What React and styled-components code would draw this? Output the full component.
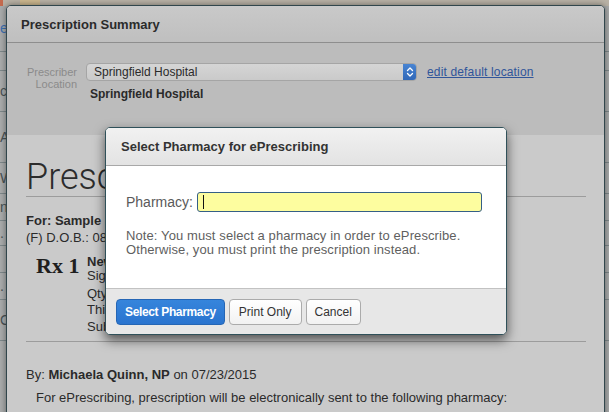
import React from 'react';
import styled, { createGlobalStyle } from 'styled-components';

const GlobalStyle = createGlobalStyle`
  html, body {
    margin: 0;
    padding: 0;
  }
  body {
    width: 609px;
    height: 412px;
    overflow: hidden;
    background: #8f9697;
    font-family: "Liberation Sans", Arial, sans-serif;
  }
`;

const Screen = styled.div`
  position: relative;
  width: 609px;
  height: 412px;
  overflow: hidden;
  background: #8f9697;
`;

// the page behind the dialogs, only a sliver of it shows at the edges
const BehindPage = styled.div`
  display: flex;
  flex-direction: column;
  width: 609px;
  height: 412px;
  background: #a9abab;
`;

const BehindTop = styled.div`
  height: 6px;
  background: linear-gradient(90deg, #c46a4e 0 3px, #b9b2a6 3px 20px, #cdb88f 20px 40px, #b9b2a6 40px);
`;

const BehindRow = styled.div`
  height: ${(p) => p.h}px;
  border-bottom: 1px solid #7d8789;
  color: ${(p) => p.color || '#4a5254'};
  font-size: 14px;
  line-height: ${(p) => p.h}px;
`;

const OuterModal = styled.div`
  position: absolute;
  left: 6px;
  top: 5px;
  width: 599px;
  bottom: -20px;
  box-sizing: border-box;
  border: 1px solid #31464c;
  border-radius: 5px 5px 0 0;
  box-shadow: 0 0 6px rgba(0, 0, 0, 0.45);
  display: flex;
  flex-direction: column;
  overflow: hidden;
  background: #cacaca;
`;

const OuterHeader = styled.div`
  height: 36px;
  display: flex;
  align-items: center;
  padding: 0 14px;
  background: linear-gradient(#c9c9c9, #bfbfbf);
  border-bottom: 1px solid #8e8e8e;
`;

const OuterTitle = styled.h3`
  margin: 0;
  font-size: 13px;
  font-weight: bold;
  color: #2b2b2b;
`;

const LocationSection = styled.div`
  height: 92px;
  box-sizing: border-box;
  padding: 20px 0 0 18px;
  background: #bcbcbc;
  display: flex;
  align-items: flex-start;
`;

const FieldLabel = styled.div`
  width: 52px;
  margin-top: 3px;
  text-align: right;
  font-size: 11px;
  line-height: 12px;
  color: #8b8b8b;
`;

const LocationColumn = styled.div`
  display: flex;
  flex-direction: column;
  margin-left: 9px;
`;

const LocationRow = styled.div`
  display: flex;
  align-items: center;
`;

const SelectBox = styled.div`
  width: 331px;
  height: 18px;
  box-sizing: border-box;
  border: 1px solid #a5a5a5;
  border-radius: 4px;
  background: linear-gradient(#d5d5d5, #cacaca);
  display: flex;
  align-items: center;
  justify-content: space-between;
  overflow: hidden;
`;

const SelectText = styled.span`
  padding-left: 7px;
  font-size: 12px;
  color: #2a2a2a;
`;

const SelectArrow = styled.span`
  width: 14px;
  height: 18px;
  margin-right: -1px;
  border-radius: 0 4px 4px 0;
  background: linear-gradient(#4a86d4, #2f66b6);
  display: flex;
  align-items: center;
  justify-content: center;
`;

const EditLink = styled.a`
  margin-left: 10px;
  font-size: 12px;
  line-height: 18px;
  color: #30559a;
  text-decoration: underline;
  letter-spacing: 0.15px;
`;

const LocationName = styled.div`
  margin: 7px 0 0 4px;
  font-size: 12px;
  line-height: 12px;
  font-weight: bold;
  color: #2a2a2a;
`;

const SummaryBody = styled.div`
  flex: 1;
  padding: 0 18px 0 19px;
  background: #cacaca;
  color: #2a2a2a;
`;

const DocTitle = styled.h1`
  margin: 24px 0 0 0;
  padding-bottom: 1px;
  font-family: Roboto, "Liberation Sans", sans-serif;
  font-weight: 300;
  font-size: 36px;
  line-height: 36px;
  color: #2c2c2c;
  border-bottom: 1px solid #9c9c9c;
`;

const Patient = styled.div`
  margin-top: 15px;
  font-size: 13px;
  line-height: 17px;
`;

const RxBlock = styled.div`
  display: flex;
  margin: 9px 0 0 10px;
`;

const RxMark = styled.div`
  width: 43px;
  margin-top: -2px;
  font-family: "Liberation Serif", "Times New Roman", serif;
  font-weight: bold;
  font-size: 22px;
  line-height: 26px;
  color: #1e1e1e;
  white-space: nowrap;
`;

const RxDetails = styled.div`
  margin-left: 8px;
  display: flex;
  flex-direction: column;
`;

const DetailLine = styled.div`
  margin-top: ${(p) => p.gap || 0}px;
  font-size: 13px;
  line-height: 14px;
  font-weight: ${(p) => (p.bold ? 'bold' : 'normal')};
  white-space: nowrap;
`;

const Rule = styled.div`
  margin-top: 7px;
  border-top: 1px solid #9c9c9c;
`;

const SignedBy = styled.div`
  margin-top: 25px;
  font-size: 13px;
  line-height: 16px;
`;

const PharmacyNote = styled.div`
  margin: 7px 0 0 10px;
  font-size: 13px;
  line-height: 16px;
`;

const Dialog = styled.div`
  position: absolute;
  left: 105px;
  top: 127px;
  width: 402px;
  height: 208px;
  box-sizing: border-box;
  border: 1px solid #2f5059;
  border-radius: 5px;
  box-shadow: 0 5px 12px rgba(0, 0, 0, 0.6);
  overflow: hidden;
  display: flex;
  flex-direction: column;
  background: #ffffff;
`;

const DialogHeader = styled.div`
  height: 37px;
  display: flex;
  align-items: center;
  padding-left: 15px;
  background: linear-gradient(#f1f1f1, #e3e3e3);
  border-bottom: 1px solid #a8a8a8;
`;

const DialogTitle = styled.h4`
  margin: 0;
  font-size: 13px;
  font-weight: bold;
  color: #333;
`;

const DialogBody = styled.div`
  height: 122px;
  box-sizing: border-box;
  padding: 26px 0 0 20px;
  background: #ffffff;
`;

const PharmacyRow = styled.div`
  display: flex;
  align-items: center;
`;

const PharmacyLabel = styled.label`
  font-size: 14px;
  line-height: 20px;
  color: #5a5a5a;
`;

const PharmacyField = styled.div`
  width: 285px;
  height: 20px;
  margin-left: 4px;
  box-sizing: border-box;
  border: 1px solid #355f86;
  border-radius: 3px;
  background: #fdfd9f;
  display: flex;
  align-items: center;
  padding-left: 5px;
`;

const Caret = styled.span`
  width: 1px;
  height: 14px;
  background: #111;
`;

const DialogNote = styled.p`
  margin: 17px 0 0 0;
  font-size: 13px;
  line-height: 14px;
  color: #5f5f5f;
  letter-spacing: 0.1px;
`;

const DialogFooter = styled.div`
  flex: 1;
  display: flex;
  gap: 4px;
  padding: 10px 0 0 10px;
  background: #e7e7e7;
  border-top: 1px solid #c2c2c2;
`;

const Button = styled.button`
  height: 26px;
  padding: 0 ${(p) => p.pad}px;
  border-radius: 4px;
  font-family: "Liberation Sans", Arial, sans-serif;
  font-size: 12px;
  cursor: pointer;
  border: 1px solid ${(p) => (p.primary ? '#2566b5' : '#ababab')};
  background: ${(p) => (p.primary ? 'linear-gradient(#3685dc, #2a74cf)' : 'linear-gradient(#ffffff, #f2f2f2)')};
  color: ${(p) => (p.primary ? '#ffffff' : '#333333')};
  font-weight: ${(p) => (p.primary ? 'bold' : 'normal')};
  letter-spacing: ${(p) => (p.primary ? '-0.35px' : '0')};
`;

const Chevrons = () => (
  <svg width="8" height="12" viewBox="0 0 8 12" fill="none" stroke="#fff" strokeWidth="1.3" strokeLinecap="round" strokeLinejoin="round">
    <polyline points="1.5,4.5 4,2 6.5,4.5" />
    <polyline points="1.5,7.5 4,10 6.5,7.5" />
  </svg>
);

export default function App() {
  return (
    <Screen>
      <GlobalStyle />
      <BehindPage>
        <BehindTop />
        <BehindRow h={45} color="#3d6fb0">e</BehindRow>
        <BehindRow h={18} />
        <BehindRow h={40}>c</BehindRow>
        <BehindRow h={50}>A</BehindRow>
        <BehindRow h={30}>W</BehindRow>
        <BehindRow h={26}>n</BehindRow>
        <BehindRow h={24}>.</BehindRow>
        <BehindRow h={26} />
        <BehindRow h={26}>.</BehindRow>
        <BehindRow h={40}>C</BehindRow>
      </BehindPage>

      <OuterModal>
        <OuterHeader>
          <OuterTitle>Prescription Summary</OuterTitle>
        </OuterHeader>

        <LocationSection>
          <FieldLabel>Prescriber Location</FieldLabel>
          <LocationColumn>
            <LocationRow>
              <SelectBox>
                <SelectText>Springfield Hospital</SelectText>
                <SelectArrow>
                  <Chevrons />
                </SelectArrow>
              </SelectBox>
              <EditLink href="#">edit default location</EditLink>
            </LocationRow>
            <LocationName>Springfield Hospital</LocationName>
          </LocationColumn>
        </LocationSection>

        <SummaryBody>
          <DocTitle>Prescription</DocTitle>
          <Patient>
            <b>For: Sample Patient</b>
            <br />
            (F) D.O.B.: 08/14/1982
          </Patient>
          <RxBlock>
            <RxMark>Rx 1</RxMark>
            <RxDetails>
              <DetailLine bold>New Rx: Amoxicillin 500 mg capsule</DetailLine>
              <DetailLine>Sig: take 1 capsule by mouth 3 times a day</DetailLine>
              <DetailLine gap={4}>Qty: 30 (thirty) capsules</DetailLine>
              <DetailLine gap={2}>This prescription may not be refilled</DetailLine>
              <DetailLine gap={3}>Substitution permitted</DetailLine>
            </RxDetails>
          </RxBlock>
          <Rule />
          <SignedBy>
            By: <b>Michaela Quinn, NP</b> on 07/23/2015
          </SignedBy>
          <PharmacyNote>
            For ePrescribing, prescription will be electronically sent to the following pharmacy:
          </PharmacyNote>
        </SummaryBody>
      </OuterModal>

      <Dialog>
        <DialogHeader>
          <DialogTitle>Select Pharmacy for ePrescribing</DialogTitle>
        </DialogHeader>
        <DialogBody>
          <PharmacyRow>
            <PharmacyLabel>Pharmacy:</PharmacyLabel>
            <PharmacyField>
              <Caret />
            </PharmacyField>
          </PharmacyRow>
          <DialogNote>
            Note: You must select a pharmacy in order to ePrescribe.
            <br />
            Otherwise, you must print the prescription instead.
          </DialogNote>
        </DialogBody>
        <DialogFooter>
          <Button primary pad={8}>Select Pharmacy</Button>
          <Button pad={9}>Print Only</Button>
          <Button pad={8}>Cancel</Button>
        </DialogFooter>
      </Dialog>
    </Screen>
  );
}
